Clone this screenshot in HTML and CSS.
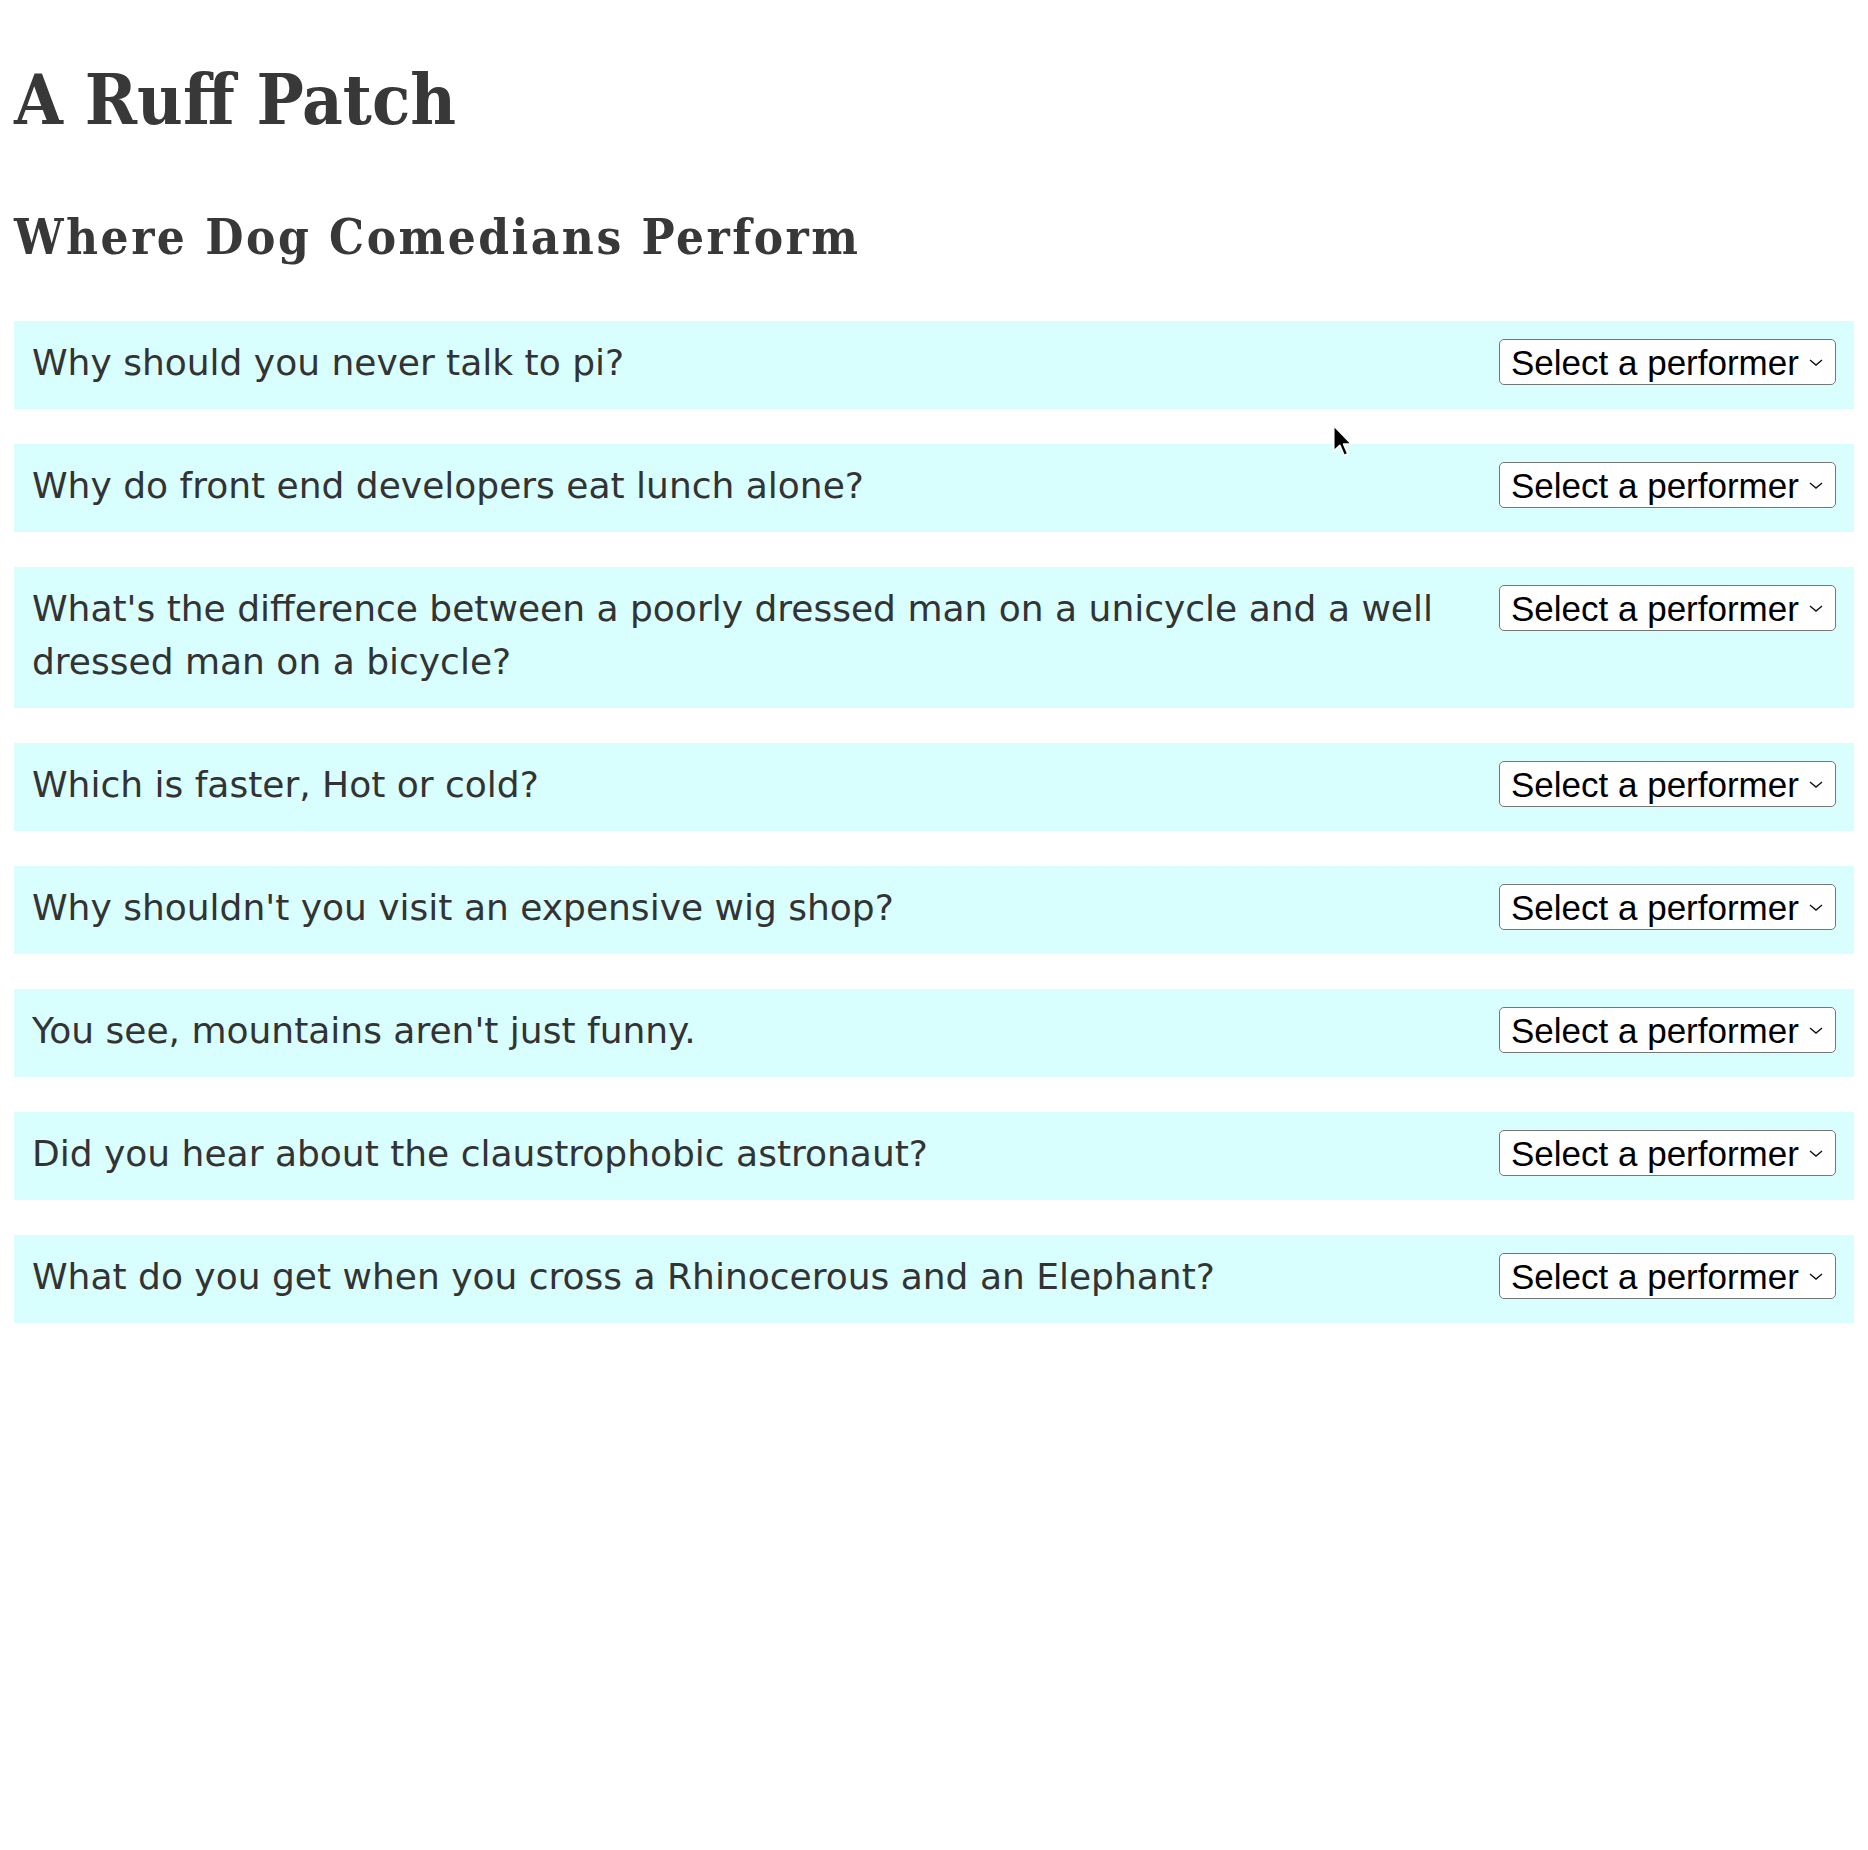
FILE: index.html
```html
<!DOCTYPE html>
<html lang="en">
<head>
<meta charset="utf-8">
<title>A Ruff Patch</title>
<link rel="stylesheet" href="styles.css">
</head>
<body>
<main class="page">
  <h1 class="title">A Ruff Patch</h1>
  <h2 class="subtitle">Where Dog Comedians Perform</h2>
  <ul class="jokes">
    <li class="joke"><p class="setup">Why should you never talk to pi?</p><span class="picker"><select class="performer"><option>Select a performer</option></select><svg class="chev" viewBox="0 0 14 7" width="14" height="7"><path d="M1 1 L7 6 L13 1" fill="none" stroke="#111" stroke-width="1.4"/></svg></span></li>
    <li class="joke"><p class="setup">Why do front end developers eat lunch alone?</p><span class="picker"><select class="performer"><option>Select a performer</option></select><svg class="chev" viewBox="0 0 14 7" width="14" height="7"><path d="M1 1 L7 6 L13 1" fill="none" stroke="#111" stroke-width="1.4"/></svg></span></li>
    <li class="joke"><p class="setup">What's the difference between a poorly dressed man on a unicycle and a well dressed man on a bicycle?</p><span class="picker"><select class="performer"><option>Select a performer</option></select><svg class="chev" viewBox="0 0 14 7" width="14" height="7"><path d="M1 1 L7 6 L13 1" fill="none" stroke="#111" stroke-width="1.4"/></svg></span></li>
    <li class="joke"><p class="setup">Which is faster, Hot or cold?</p><span class="picker"><select class="performer"><option>Select a performer</option></select><svg class="chev" viewBox="0 0 14 7" width="14" height="7"><path d="M1 1 L7 6 L13 1" fill="none" stroke="#111" stroke-width="1.4"/></svg></span></li>
    <li class="joke"><p class="setup">Why shouldn't you visit an expensive wig shop?</p><span class="picker"><select class="performer"><option>Select a performer</option></select><svg class="chev" viewBox="0 0 14 7" width="14" height="7"><path d="M1 1 L7 6 L13 1" fill="none" stroke="#111" stroke-width="1.4"/></svg></span></li>
    <li class="joke"><p class="setup">You see, mountains aren't just funny.</p><span class="picker"><select class="performer"><option>Select a performer</option></select><svg class="chev" viewBox="0 0 14 7" width="14" height="7"><path d="M1 1 L7 6 L13 1" fill="none" stroke="#111" stroke-width="1.4"/></svg></span></li>
    <li class="joke"><p class="setup">Did you hear about the claustrophobic astronaut?</p><span class="picker"><select class="performer"><option>Select a performer</option></select><svg class="chev" viewBox="0 0 14 7" width="14" height="7"><path d="M1 1 L7 6 L13 1" fill="none" stroke="#111" stroke-width="1.4"/></svg></span></li>
    <li class="joke"><p class="setup">What do you get when you cross a Rhinocerous and an Elephant?</p><span class="picker"><select class="performer"><option>Select a performer</option></select><svg class="chev" viewBox="0 0 14 7" width="14" height="7"><path d="M1 1 L7 6 L13 1" fill="none" stroke="#111" stroke-width="1.4"/></svg></span></li>
  </ul>
</main>
<svg class="cursor" viewBox="0 0 13 20" width="22" height="34"><path d="M1 1 L1 16 L4.6 12.6 L7.2 18.6 L9.4 17.6 L6.9 11.8 L11.6 11.8 Z" fill="#000" stroke="#fff" stroke-width="1" stroke-linejoin="round"/></svg>
</body>
</html>
```
FILE: styles.css
```css
html, body {
  margin: 0;
  padding: 0;
  background: #fff;
}

.page {
  padding: 0 14px;
  color: #353535;
}

.title {
  margin: 58px 0 0;
  font-family: "DejaVu Serif Condensed", "DejaVu Serif", serif;
  font-weight: bold;
  font-size: 70px;
  line-height: 84px;
  color: #383838;
}

.subtitle {
  margin: 66px 0 0;
  font-family: "DejaVu Serif Condensed", "DejaVu Serif", serif;
  font-weight: bold;
  font-size: 49px;
  line-height: 59px;
  letter-spacing: 2.5px;
  color: #383838;
}

.jokes {
  list-style: none;
  margin: 54px 0 0;
  padding: 0;
  display: flex;
  flex-direction: column;
  gap: 35px;
}

.joke {
  display: flex;
  justify-content: space-between;
  align-items: flex-start;
  gap: 20px;
  padding: 15px 18px 20px;
  background: #d9fefe;
}

.setup {
  margin: 0;
  flex: 1;
  font-family: "DejaVu Sans", Verdana, sans-serif;
  font-size: 36px;
  line-height: 53px;
  color: #333;
}

.picker {
  position: relative;
  display: inline-block;
  flex: none;
  margin-top: 3px;
}

.performer {
  -webkit-appearance: none;
  appearance: none;
  display: block;
  height: 46px;
  margin: 0;
  padding: 0 36px 0 11px;
  font-family: "Liberation Sans", Arial, sans-serif;
  font-size: 35px;
  color: #000;
  background: #fff;
  border: 1px solid #767676;
  border-radius: 5px;
}

.chev {
  position: absolute;
  right: 13px;
  top: 20px;
  pointer-events: none;
}

.cursor {
  position: absolute;
  left: 1332px;
  top: 424px;
}
```
